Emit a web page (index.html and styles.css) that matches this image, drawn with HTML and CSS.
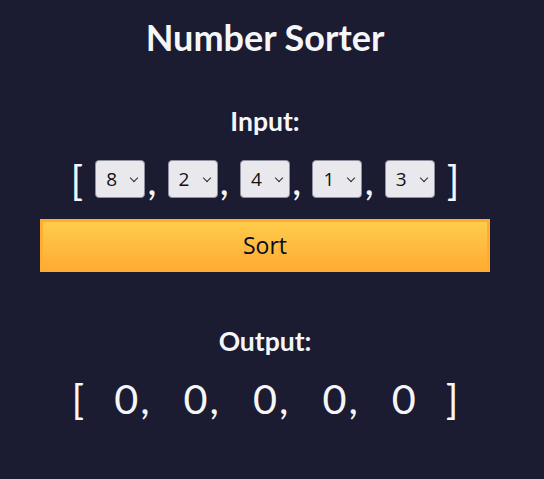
FILE: index.html
```html
<!DOCTYPE html>
<html lang="en">
<head>
<meta charset="utf-8">
<title>Number Sorter</title>
<link rel="stylesheet" href="styles.css">
</head>
<body>
<main class="app">
  <h1 class="title">Number Sorter</h1>
  <form class="input-section">
    <h2 class="section-title">Input:</h2>
    <div class="array-row">
      <span class="bracket open">[</span>
      <span class="item"><span class="pick"><select class="num"><option>8</option></select></span><span class="comma">,</span></span>
      <span class="item"><span class="pick"><select class="num"><option>2</option></select></span><span class="comma">,</span></span>
      <span class="item"><span class="pick"><select class="num"><option>4</option></select></span><span class="comma">,</span></span>
      <span class="item"><span class="pick"><select class="num"><option>1</option></select></span><span class="comma">,</span></span>
      <span class="item"><span class="pick"><select class="num"><option>3</option></select></span></span>
      <span class="bracket close">]</span>
    </div>
    <button type="button" class="sort-btn">Sort</button>
  </form>
  <section class="output-section">
    <h2 class="section-title">Output:</h2>
    <div class="output-row">
      <span class="bracket open">[</span>
      <span class="out-item">0<span class="comma">,</span></span>
      <span class="out-item">0<span class="comma">,</span></span>
      <span class="out-item">0<span class="comma">,</span></span>
      <span class="out-item">0<span class="comma">,</span></span>
      <span class="out-item">0</span>
      <span class="bracket close">]</span>
    </div>
  </section>
</main>
</body>
</html>
```
FILE: styles.css
```css
* {
  box-sizing: border-box;
  margin: 0;
  padding: 0;
}

html, body {
  background: #1b1b32;
}

body {
  color: #f5f6f7;
  font-family: "Lato", "Liberation Sans", sans-serif;
  font-size: 18px;
}

.app {
  width: 530px;
  display: flex;
  flex-direction: column;
  align-items: center;
}

.title {
  margin-top: 16px;
  font-size: 36px;
  font-weight: 700;
  line-height: 43px;
}

.input-section {
  width: 450px;
  display: flex;
  flex-direction: column;
  align-items: center;
}

.section-title {
  font-size: 26.5px;
  font-weight: 700;
  line-height: 32px;
}

.input-section .section-title {
  margin-top: 46px;
}

.array-row {
  margin-top: 23px;
  display: flex;
  align-items: center;
  gap: 11px;
  height: 38px;
}

.array-row .open {
  margin-right: 1px;
}

.array-row .close {
  margin-left: 1px;
}

.bracket,
.comma {
  font-size: 41.4px;
  line-height: 38px;
  font-weight: 400;
}

.item {
  display: flex;
  align-items: center;
}

.item .comma {
  margin-left: 2px;
}

.pick {
  position: relative;
  display: block;
  width: 50px;
  height: 38px;
}

.pick::after {
  content: "";
  position: absolute;
  left: 36px;
  top: 15px;
  width: 5px;
  height: 5px;
  border-right: 1.5px solid #2b2b2b;
  border-bottom: 1.5px solid #2b2b2b;
  transform: rotate(45deg);
  pointer-events: none;
}

.num {
  -webkit-appearance: none;
  appearance: none;
  display: block;
  width: 50px;
  height: 38px;
  background: #e9e9ed;
  border: 1px solid #8f8f9d;
  border-radius: 4px;
  color: #111;
  font-family: "Open Sans", "Noto Sans", sans-serif;
  font-size: 19px;
  padding: 0 0 0 10px;
}

.sort-btn {
  margin-top: 21px;
  width: 450px;
  height: 53px;
  background-image: linear-gradient(#fecc4c, #ffac33);
  border: 3px solid #feac32;
  color: #0a0a23;
  font-family: "Open Sans", "Noto Sans", sans-serif;
  font-size: 23px;
  line-height: 29px;
}

.output-section {
  display: flex;
  flex-direction: column;
  align-items: center;
}

.output-section .section-title {
  margin-top: 53px;
}

.output-row {
  margin-top: 16px;
  display: flex;
  align-items: baseline;
  gap: 34px;
  font-size: 41.4px;
  line-height: 50px;
}

.output-row .bracket {
  line-height: 50px;
}

.output-row .open {
  margin-right: -4px;
}

.output-row .close {
  margin-left: -4px;
}

.out-item .comma {
  margin-left: 2px;
  line-height: 50px;
}
```
